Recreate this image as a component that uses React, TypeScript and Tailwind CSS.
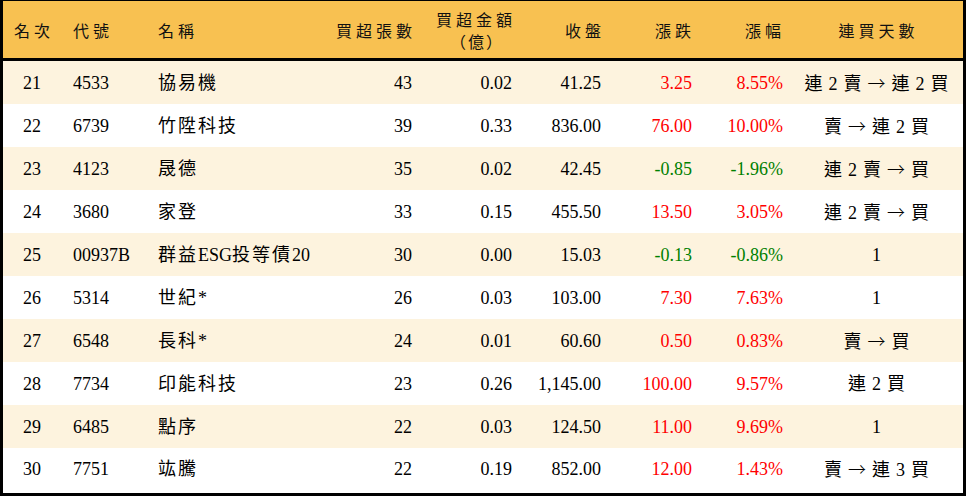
import React from "react";

type Row = {
  rank: string;
  code: string;
  name: string;
  vol: string;
  amt: string;
  close: string;
  chg: string;
  pct: string;
  days: string;
  up: boolean;
};

const rows: Row[] = [
  { rank: "21", code: "4533", name: "協易機", vol: "43", amt: "0.02", close: "41.25", chg: "3.25", pct: "8.55%", days: "連2賣→連2買", up: true },
  { rank: "22", code: "6739", name: "竹陞科技", vol: "39", amt: "0.33", close: "836.00", chg: "76.00", pct: "10.00%", days: "賣→連2買", up: true },
  { rank: "23", code: "4123", name: "晟德", vol: "35", amt: "0.02", close: "42.45", chg: "-0.85", pct: "-1.96%", days: "連2賣→買", up: false },
  { rank: "24", code: "3680", name: "家登", vol: "33", amt: "0.15", close: "455.50", chg: "13.50", pct: "3.05%", days: "連2賣→買", up: true },
  { rank: "25", code: "00937B", name: "群益ESG投等債20", vol: "30", amt: "0.00", close: "15.03", chg: "-0.13", pct: "-0.86%", days: "1", up: false },
  { rank: "26", code: "5314", name: "世紀*", vol: "26", amt: "0.03", close: "103.00", chg: "7.30", pct: "7.63%", days: "1", up: true },
  { rank: "27", code: "6548", name: "長科*", vol: "24", amt: "0.01", close: "60.60", chg: "0.50", pct: "0.83%", days: "賣→買", up: true },
  { rank: "28", code: "7734", name: "印能科技", vol: "23", amt: "0.26", close: "1,145.00", chg: "100.00", pct: "9.57%", days: "連2買", up: true },
  { rank: "29", code: "6485", name: "點序", vol: "22", amt: "0.03", close: "124.50", chg: "11.00", pct: "9.69%", days: "1", up: true },
  { rank: "30", code: "7751", name: "竑騰", vol: "22", amt: "0.19", close: "852.00", chg: "12.00", pct: "1.43%", days: "賣→連3買", up: true },
];

const FONT = "font-['Liberation_Serif','Noto_Sans_CJK_TC',serif]";

function Name({ text }: { text: string }) {
  const parts = text.match(/[\x00-\x7F]+|[^\x00-\x7F]+/g) || [];
  return (
    <span>
      {parts.map((p, i) =>
        /^[\x00-\x7F]+$/.test(p) ? (
          <span key={i}>{p}</span>
        ) : (
          <span key={i} className="tracking-[2px]">
            {p}
          </span>
        )
      )}
    </span>
  );
}

function Days({ text }: { text: string }) {
  const parts = text.split("→");
  return (
    <span className="whitespace-nowrap">
      {parts.map((p, i) => (
        <React.Fragment key={i}>
          {i > 0 && (
            <span className="font-['Noto_Sans_CJK_TC',sans-serif] font-light">→</span>
          )}
          <span>{p}</span>
        </React.Fragment>
      ))}
    </span>
  );
}

const grid =
  "grid grid-cols-[58px_89px_180px_90px_100px_90px_90px_90px_1fr] items-center";

export default function App() {
  return (
    <div className={`w-[966px] h-[496px] overflow-hidden bg-white ${FONT}`}>
      <div className="w-[966px] h-[496px] border-x-[3px] border-b-[3px] border-t border-black flex flex-col">
        <div
          className={`${grid} h-[60px] shrink-0 bg-[#F8C151] border-b-[3px] border-black text-[16px] leading-[20px] tracking-[4px] text-[#111] font-['Noto_Sans_CJK_TC',sans-serif]`}
        >
          <div className="text-center pl-[4px]">名次</div>
          <div className="pl-[12px]">代號</div>
          <div className="pl-[8px]">名稱</div>
          <div className="text-right pr-[4px]">買超張數</div>
          <div className="flex justify-end pr-[4px]">
            <div className="flex flex-col items-center">
              <span className="block leading-[22px]">買超金額</span>
              <span className="block leading-[22px] tracking-[2px] pl-[2px]">（億）</span>
            </div>
          </div>
          <div className="text-right pr-[5px]">收盤</div>
          <div className="text-right pr-[5px]">漲跌</div>
          <div className="text-right pr-[5px]">漲幅</div>
          <div className="text-center pl-[4px]">連買天數</div>
        </div>
        {rows.map((r, i) => {
          const color = r.up ? "text-[#FF0000]" : "text-[#008000]";
          return (
            <div
              key={r.rank}
              className={`${grid} ${i === rows.length - 1 ? "h-[42px]" : "h-[43px]"} shrink-0 text-[18px] leading-[22px] text-black ${
                i % 2 === 0 ? "bg-[#FDF3DE]" : "bg-white"
              }`}
            >
              <div className="text-center">{r.rank}</div>
              <div className="pl-[12px] whitespace-nowrap">{r.code}</div>
              <div className="pl-[8px] whitespace-nowrap">
                <Name text={r.name} />
              </div>
              <div className="text-right pr-[8px]">{r.vol}</div>
              <div className="text-right pr-[8px]">{r.amt}</div>
              <div className="text-right pr-[9px]">{r.close}</div>
              <div className={`text-right pr-[8px] ${color}`}>{r.chg}</div>
              <div className={`text-right pr-[7px] ${color}`}>{r.pct}</div>
              <div className="text-center pl-[6px] tracking-[6px] whitespace-nowrap">
                <Days text={r.days} />
              </div>
            </div>
          );
        })}
      </div>
    </div>
  );
}
